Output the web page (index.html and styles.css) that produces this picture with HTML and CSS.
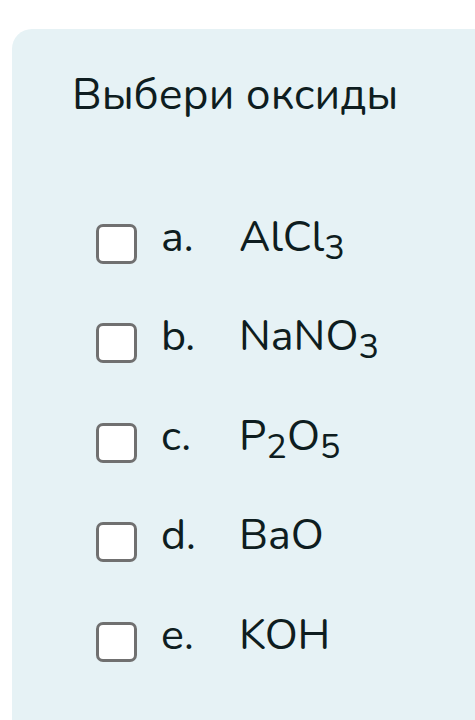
FILE: index.html
```html
<!DOCTYPE html>
<html lang="ru">
<head>
    <meta charset="UTF-8">
    <meta name="viewport" content="width=device-width, initial-scale=1.0">
    <title>Выбери оксиды</title>
    <link rel="stylesheet" href="styles.css">
</head>
<body>
    <div class="question">
        <h2 class="question-text">Выбери оксиды</h2>
        <div class="answers">
            <label class="answer">
                <input type="checkbox" name="answer_a">
                <span class="box"></span>
                <span class="letter">a.</span>
                <span class="formula">AlCl<sub>3</sub></span>
            </label>
            <label class="answer">
                <input type="checkbox" name="answer_b">
                <span class="box"></span>
                <span class="letter">b.</span>
                <span class="formula">NaNO<sub>3</sub></span>
            </label>
            <label class="answer">
                <input type="checkbox" name="answer_c">
                <span class="box"></span>
                <span class="letter">c.</span>
                <span class="formula">P<sub>2</sub>O<sub>5</sub></span>
            </label>
            <label class="answer">
                <input type="checkbox" name="answer_d">
                <span class="box"></span>
                <span class="letter">d.</span>
                <span class="formula">BaO</span>
            </label>
            <label class="answer">
                <input type="checkbox" name="answer_e">
                <span class="box"></span>
                <span class="letter">e.</span>
                <span class="formula">KOH</span>
            </label>
        </div>
    </div>
</body>
</html>
```

FILE: styles.css
```css
body {
    font-family: "Nunito", Lato, "Noto Sans", sans-serif;
    background-color: #fff;
    color: #0e1d20;
    margin: 0;
    padding: 0;
}

.question {
    margin: 29px 0 0 12px;
    padding: 0 0 0 60px;
    height: 691px;
    overflow: hidden;
    background-color: #e6f2f5;
    border-radius: 20px 0 0 0;
}

.question-text {
    margin: 0;
    padding-top: 41px;
    font-size: 44px;
    font-weight: normal;
    line-height: 50px;
}

.answers {
    padding: 74px 0 0 24px;
}

.answer {
    display: flex;
    align-items: center;
    height: 99.5px;
    font-size: 43px;
    cursor: pointer;
}

.answer input {
    display: none;
}

.box {
    width: 35px;
    height: 34px;
    border: 3px solid #707070;
    border-radius: 7px;
    background-color: #fff;
    flex-shrink: 0;
}

.answer input:checked + .box {
    background-color: #0f6cbf;
}

/* text sits a little above the box centre */
.letter,
.formula {
    margin-bottom: 14px;
}

.letter {
    width: 78px;
    margin-left: 24px;
}

.formula sub {
    font-size: 0.8em;
    vertical-align: -0.22em;
    line-height: 0;
}
```
